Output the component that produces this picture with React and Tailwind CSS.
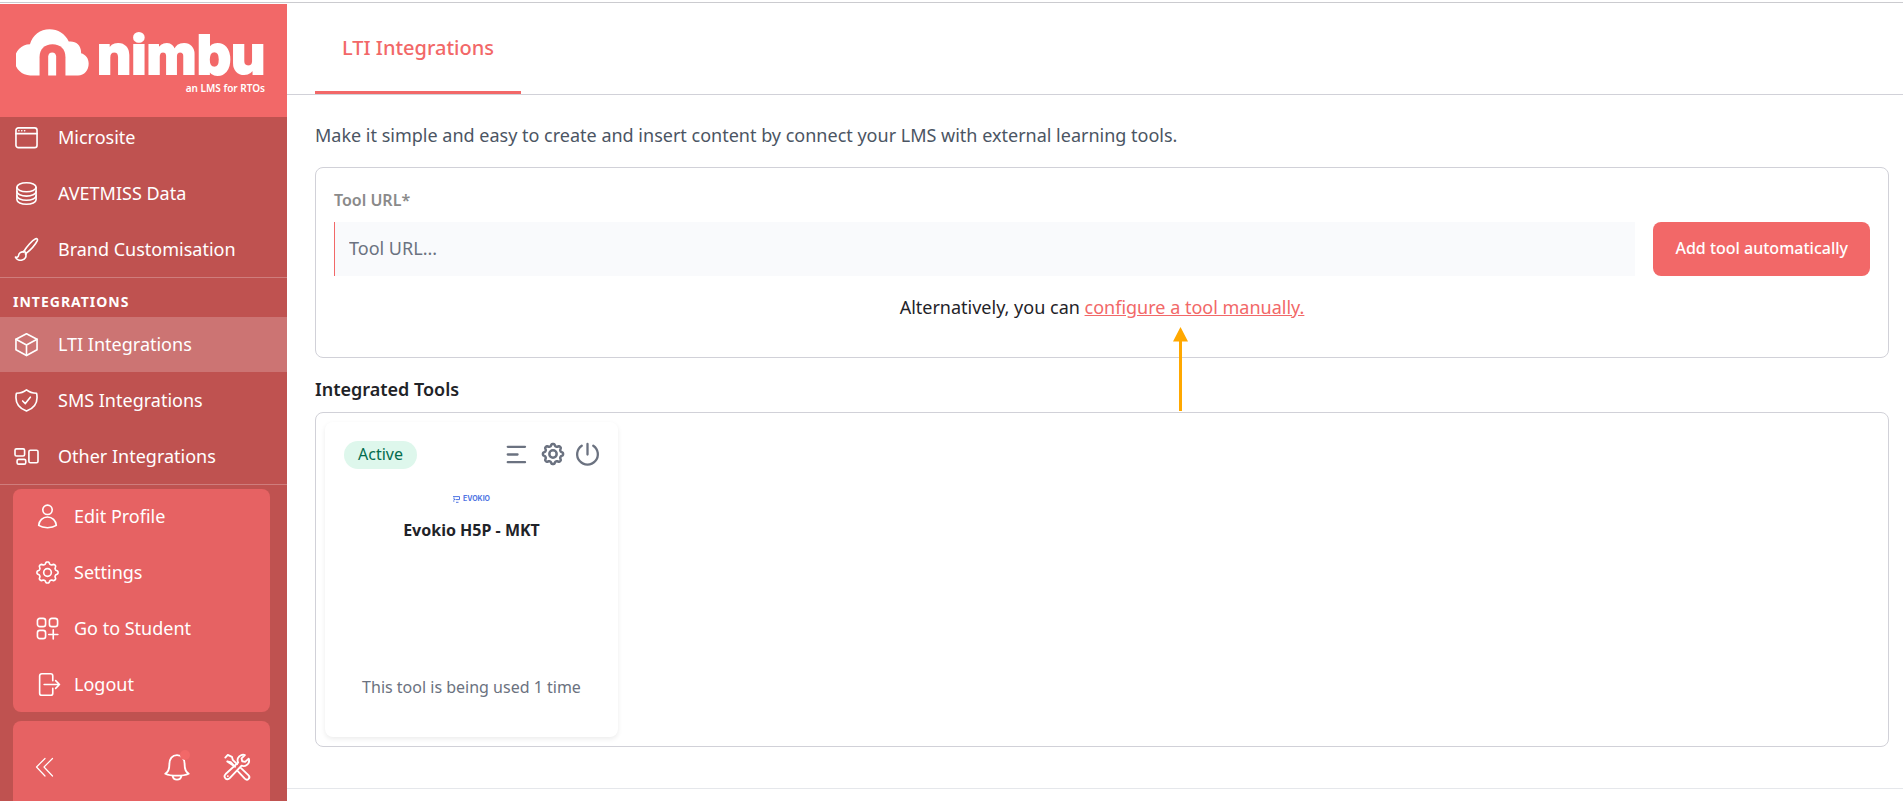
import { useState } from "react";

// Outline of an 8-tooth cog, centred in a 24x24 box
const cogPath = (() => {
  const pts = [];
  for (let i = 0; i < 128; i++) {
    const a = (i / 128) * Math.PI * 2;
    const r = 9.9 + 1.2 * Math.tanh(1.6 * Math.cos(8 * a));
    pts.push(`${(12 + r * Math.sin(a)).toFixed(2)} ${(12 - r * Math.cos(a)).toFixed(2)}`);
  }
  return `M${pts.join("L")}Z`;
})();

function Icon({ children, className = "size-[23px]", stroke = 1.7 }) {
  return (
    <svg
      viewBox="0 0 24 24"
      className={`shrink-0 overflow-visible ${className}`}
      fill="none"
      stroke="currentColor"
      strokeWidth={stroke}
      strokeLinecap="round"
      strokeLinejoin="round"
      aria-hidden="true"
    >
      {children}
    </svg>
  );
}

const icons = {
  window: (
    <>
      <rect x="1" y="2" width="22" height="20.5" rx="2.5" />
      <path d="M1 8h22M4 5h.1M7 5h.1M10 5h.1" />
    </>
  ),
  database: (
    <>
      <ellipse cx="12" cy="5.5" rx="10" ry="4.7" />
      <path d="M2 5.5v13c0 2.6 4.5 4.7 10 4.7s10-2.1 10-4.7v-13" />
      <path d="M2 10c0 2.6 4.5 4.7 10 4.7s10-2.1 10-4.7M2 14.3c0 2.6 4.5 4.7 10 4.7s10-2.1 10-4.7" />
    </>
  ),
  brush: (
    <>
      <path d="M9 14.5C12 9 18 2.5 21.5.9c1.5-.6 2.4.4 1.8 1.8C21.500 6.5 15.5 13 11 16.5" />
      <path d="M8.800 13.8c1.6.2 2.8 1.5 2.7 3" />
      <path d="M9 14.5c-2.700-.4-5 1-5.3 3.8-.1 1.5-1.4 2-3.2 1.7 1 2.6 4 3.8 7 3 3.2-.8 4.700-3.800 3.500-6.500" />
    </>
  ),
  cube: (
    <>
      <path d="M12 .8l11 5.700v11L12 23.500 1 17.500v-11z" />
      <path d="M1 6.500l11 6 11-6M12 12.500v11" />
    </>
  ),
  shield: (
    <>
      <path d="M12 .8c3 2.500 6.500 3.500 10.500 3.600.3 1 .5 2.500.5 4.600 0 7-4.500 11.500-11 14C5.500 20.500 1 16 1 9c0-2.100.2-3.600.5-4.600C5.500 4.300 9 3.300 12 .8z" />
      <path d="M8 12.500l2.800 2.700L16 8.500" />
    </>
  ),
  blocks: (
    <>
      <rect x="0" y="4" width="10" height="7.5" rx="1.5" />
      <rect x="2.2" y="15" width="9" height="5" rx="1.5" />
      <rect x="14.5" y="5.5" width="9.5" height="13" rx="1.5" />
    </>
  ),
  user: (
    <>
      <circle cx="12" cy="5" r="4.9" />
      <path d="M12 12.500c-5 0-8.800 3.800-9.200 8.800 2.500 1.800 5.700 2.400 9.200 2.400s6.700-.6 9.200-2.400c-.4-5-4.200-8.800-9.200-8.800z" />
    </>
  ),
  cog: (
    <>
      <path d={cogPath} />
      <circle cx="12" cy="12" r="4" />
    </>
  ),
  student: (
    <>
      <rect x="1.5" y="1.5" width="8.5" height="8.5" rx="2.5" />
      <rect x="14" y="1.5" width="8.5" height="8.5" rx="2.5" />
      <rect x="1.5" y="14" width="8.5" height="8.5" rx="2.5" />
      <path d="M18 13.500v9.500M13.300 18.200h9.500" />
    </>
  ),
  logout: (
    <>
      <path d="M17.500 8V3c0-1.400-.8-2.200-2.200-2.200H6C4.600.8 3.800 1.600 3.800 3v18c0 1.400.8 2.200 2.200 2.200h9.300c1.400 0 2.200-.8 2.200-2.200v-5" />
      <path d="M8.500 12h16M20.500 8l4 4-4 4" />
    </>
  ),
};

const mainLinks = [
  { label: "Microsite", icon: "window" },
  { label: "AVETMISS Data", icon: "database" },
  { label: "Brand Customisation", icon: "brush" },
];

const integrationLinks = [
  { label: "LTI Integrations", icon: "cube", active: true },
  { label: "SMS Integrations", icon: "shield" },
  { label: "Other Integrations", icon: "blocks" },
];

const profileLinks = [
  { label: "Edit Profile", icon: "user" },
  { label: "Settings", icon: "cog" },
  { label: "Go to Student", icon: "student" },
  { label: "Logout", icon: "logout" },
];

function NavLink({ item }) {
  return (
    <a
      href="#"
      className={`flex h-[55px] shrink-0 items-center gap-5 pl-[15px] ${item.active ? "bg-[#cc7473]" : "hover:bg-white/10"}`}
    >
      <Icon>{icons[item.icon]}</Icon>
      <span className="pb-[2px]">{item.label}</span>
    </a>
  );
}

function Logo() {
  return (
    <a href="#" className="flex h-[113px] shrink-0 flex-col bg-[#f26868] pt-[25px] pl-4 text-white">
      <div className="flex items-end gap-2">
        <svg viewBox="48 87 220 140" className="h-[47px] w-[73px]" aria-hidden="true">
          <g fill="#fff">
            <path d="M92 226a44 44 0 0 1-2-94c8-27 31-45 59-45 25 0 48 14 58 37 20-3 39 11 37 35 14 4 23 15 23 31 0 21-13 36-32 36z" />
          </g>
          <path d="M119 228v-57c0-24 15-39 39-39s39 15 39 39v57z" fill="#f26868" />
          <path d="M145 226v-57c0-7 5-12 12-12s12 5 12 12v57z" fill="#fff" />
        </svg>
        <span className="h-[47px] font-['Inter',sans-serif] text-[54px] leading-[52px] font-extrabold [-webkit-text-stroke:2px_white]">
          nimbu
        </span>
      </div>
      <span className="mr-[22px] self-end text-[10px] leading-6 font-semibold">an LMS for RTOs</span>
    </a>
  );
}

function Sidebar() {
  return (
    <aside className="flex w-[287px] shrink-0 flex-col bg-[#bf5250] text-lg text-white">
      <Logo />
      {/* list is scrolled to its end */}
      <nav className="flex min-h-0 flex-1 flex-col justify-end overflow-hidden">
        <div className="flex flex-col gap-px">
          {mainLinks.map((item) => (
            <NavLink key={item.label} item={item} />
          ))}
        </div>
        <h2 className="flex h-10 shrink-0 items-center border-t border-white/25 pt-2 pl-[13px] text-sm font-bold tracking-[1px] uppercase">
          Integrations
        </h2>
        <div className="flex flex-col gap-px border-b border-white/25">
          {integrationLinks.map((item) => (
            <NavLink key={item.label} item={item} />
          ))}
        </div>
      </nav>

      <div className="mt-1 mr-[17px] ml-[13px] flex flex-col gap-px rounded-lg bg-[#e66263]">
        {profileLinks.map((item) => (
          <a key={item.label} href="#" className="flex h-[55px] items-center gap-[15px] pl-[23px]">
            <Icon>{icons[item.icon]}</Icon>
            <span className="pb-[2px]">{item.label}</span>
          </a>
        ))}
      </div>

      <div className="mt-[9px] mr-[17px] ml-[13px] flex h-20 shrink-0 items-center rounded-t-lg bg-[#e66263] pt-3 pr-5 pl-5">
        <button type="button" aria-label="Collapse menu">
          <Icon className="size-6" stroke={1.2}>
            <path d="M12 3.500l-8.500 8.500 8.500 9M19.500 3.500L11 12l8.500 9" />
          </Icon>
        </button>
        <button type="button" aria-label="Notifications" className="relative ml-auto">
          <Icon className="size-[26px]" stroke={1.7}>
            <path d="M12 1C7.500 1 5 4.500 5 9c0 6-1.500 7.500-3.800 9.200C4 19.500 8 20 12 20s8-.5 10.800-1.800C20.500 16.500 19 15 19 9c0-4.500-2.500-8-7-8z" />
            <path d="M8 20.200c.3 2.300 1.800 3.500 4 3.500s3.700-1.200 4-3.500" />
          </Icon>
          <span className="absolute -top-1 right-0 size-[10px] rounded-full bg-[#f26868]" />
        </button>
        <button type="button" aria-label="Tools" className="ml-[34px]">
          <Icon className="size-[26px]" stroke={1.7}>
            <path d="M1.200 3.300l2.300-2.500 3.800 1.800.8 2.800 4 4M10.300 11.800L6.200 7.500l-3.200-.7z" />
            <path d="M15.500 12.800l7 6.700c1.300 1.300 1 2.700.2 3.500s-2.300 1-3.500-.2l-6.500-7" />
            <path d="M22.800 4.300l-3.300 3-2.700-.6-.6-2.600L19.300 1c-2.500-.8-5.200.3-6.300 2.600-.7 1.500-.6 3 .1 4.300L1.500 18.500c-1.300 1.300-1.200 2.900-.2 4s2.800 1.100 4-.2L16.200 10.800c1.600.6 3.300.5 4.800-.6 2-1.400 2.600-3.800 1.800-5.900z" />
            <path d="M3.500 20.400h.1" />
          </Icon>
        </button>
      </div>
    </aside>
  );
}

function ToolForm() {
  const [url, setUrl] = useState("");

  return (
    <form
      onSubmit={(e) => e.preventDefault()}
      className="rounded-lg border border-[#d1d1d8] px-[18px] pt-5 pb-9"
    >
      <label htmlFor="tool-url" className="block text-base leading-6 font-semibold text-[#8a8a8a]">
        Tool URL*
      </label>
      <div className="mt-[10px] flex gap-[18px]">
        <input
          id="tool-url"
          type="text"
          value={url}
          onChange={(e) => setUrl(e.target.value)}
          placeholder="Tool URL..."
          className="h-[54px] min-w-0 flex-1 border-l border-[#f26868] bg-[#f9fafc] px-[14px] pb-[2px] text-lg outline-none placeholder:text-[#6b7280]"
        />
        <button type="submit" className="rounded-lg bg-[#f26868] px-[22px] pb-[2px] text-base font-medium text-white">
          Add tool automatically
        </button>
      </div>
      <p className="mt-[17px] text-center text-lg leading-7 text-[#1f2328]">
        Alternatively, you can{" "}
        <a href="#" className="relative text-[#f26868] underline">
          configure a tool manually.
          <svg viewBox="0 0 15 84" className="absolute top-full left-[88px] mt-2 h-[84px] w-[15px]" aria-hidden="true">
            <path d="M7.500 0L15 14.500H9V84H6V14.500H0z" fill="#ffa800" />
          </svg>
        </a>
      </p>
    </form>
  );
}

function EvokioLogo() {
  return (
    <div className="flex items-center justify-center gap-[3px] text-[#4f74e3]">
      <svg viewBox="0 0 7 7" className="size-[7px]" fill="none" stroke="currentColor" aria-hidden="true">
        <path d="M0 .6h6.500v3H3M1 1.500v2h1.500M3 6.300h2.500M0 5h1.500" />
      </svg>
      <span className="font-['Inter',sans-serif] text-[7px] leading-[10px] font-bold">EVOKIO</span>
    </div>
  );
}

function ToolCard() {
  return (
    <article className="flex h-[315px] w-[293px] flex-col rounded-lg bg-white px-[19px] pt-[19px] text-center shadow-[0_2px_5px_rgba(0,0,0,0.08)]">
      <div className="flex items-center">
        <span className="rounded-full bg-[#def7ec] px-[14px] pt-px pb-[3px] text-base leading-6 text-[#046c4e]">
          Active
        </span>
        <div className="ml-auto flex items-center gap-3 pb-[2px] text-[#6b7280]">
          <button type="button" aria-label="Details">
            <Icon className="size-[23px]" stroke={2.4}>
              <path d="M.8 4h18M.8 12H11M.8 20h18" />
            </Icon>
          </button>
          <button type="button" aria-label="Tool settings">
            <Icon className="size-[22px]" stroke={2.7}>{icons.cog}</Icon>
          </button>
          <button type="button" aria-label="Disable tool">
            <Icon className="size-[23px]" stroke={2.4}>
              <path d="M12 1v11M6 2.800a10.800 10.800 0 1 0 12 0" />
            </Icon>
          </button>
        </div>
      </div>
      <div className="mt-[25px]">
        <EvokioLogo />
      </div>
      <h3 className="mt-[14px] text-base leading-6 font-bold text-[#1f2328]">Evokio H5P - MKT</h3>
      <p className="mt-auto mb-[38px] text-base leading-6 text-[#6b7280]">This tool is being used 1 time</p>
    </article>
  );
}

export default function App() {
  return (
    <div className="flex h-screen flex-col overflow-hidden bg-white pt-[2px] font-['Noto_Sans',sans-serif]">
      <div className="h-[2px] shrink-0 border-t border-[#cbcbcf]" />
      <div className="flex min-h-0 flex-1">
        <Sidebar />
        <main className="min-w-0 flex-1">
          <div className="flex border-b border-[#d1d1d8] pl-7">
            <a
              href="#"
              className="flex h-[90px] items-center border-b-3 border-[#f26868] px-[27px] text-xl font-medium text-[#f26868]"
            >
              LTI Integrations
            </a>
          </div>

          <section className="pt-[26px] pr-[14px] pl-7">
            <p className="mb-[18px] text-lg leading-7 text-[#4b5563]">
              Make it simple and easy to create and insert content by connect your LMS with external learning tools.
            </p>
            <ToolForm />
            <h2 className="mt-[17px] mb-[9px] text-lg leading-7 font-semibold text-[#1f2328]">Integrated Tools</h2>
            <div className="flex flex-wrap rounded-lg border border-[#d1d1d8] p-[9px]">
              <ToolCard />
            </div>
          </section>

          <footer className="mt-[41px] border-t border-[#e5e7eb]" />
        </main>
      </div>
    </div>
  );
}
